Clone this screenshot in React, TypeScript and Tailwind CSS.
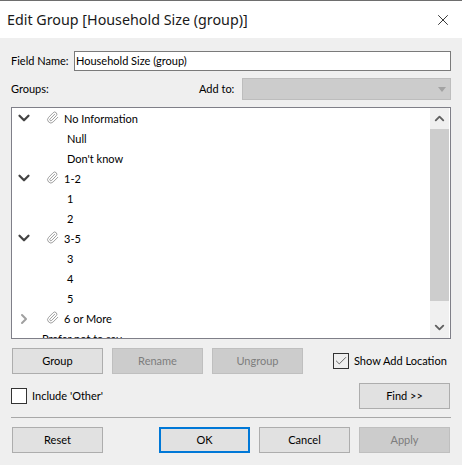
import { ChevronDown, ChevronRight, ChevronUp, Paperclip, X, Check } from "lucide-react";

type Row = { label: string; kind: "open" | "closed" | "item" | "loose" };

const rows: Row[] = [
  { label: "No Information", kind: "open" },
  { label: "Null", kind: "item" },
  { label: "Don't know", kind: "item" },
  { label: "1-2", kind: "open" },
  { label: "1", kind: "item" },
  { label: "2", kind: "item" },
  { label: "3-5", kind: "open" },
  { label: "3", kind: "item" },
  { label: "4", kind: "item" },
  { label: "5", kind: "item" },
  { label: "6 or More", kind: "closed" },
  { label: "Prefer not to say", kind: "loose" },
];

function TreeRow({ row }: { row: Row }) {
  if (row.kind === "item") {
    return <div className="h-5 shrink-0 pl-[52px] leading-5">{row.label}</div>;
  }
  if (row.kind === "loose") {
    return <div className="h-5 shrink-0 pl-[27px] leading-5">{row.label}</div>;
  }
  return (
    <div className="flex h-5 shrink-0 items-center">
      <span className="flex w-[18px] justify-center">
        {row.kind === "open" ? (
          <ChevronDown className="mb-[2px] h-[18px] w-[18px] shrink-0 text-[#444444]" strokeWidth={3} />
        ) : (
          <ChevronRight className="h-[16px] w-[16px] shrink-0 text-[#a0a0a0]" strokeWidth={3} />
        )}
      </span>
      <Paperclip className="ml-[13px] mb-[3px] h-[13px] w-[13px] text-[#8a8a8a]" strokeWidth={1.5} />
      <span className="ml-[5px] leading-5">{row.label}</span>
    </div>
  );
}

function Btn({ label, disabled, primary, className = "" }: { label: string; disabled?: boolean; primary?: boolean; className?: string }) {
  const look = disabled
    ? "border-[#bfbfbf] bg-[#cccccc] text-[#7d7d7d]"
    : primary
      ? "border-2 border-[#0078d7] bg-[#e1e1e1] text-black"
      : "border-[#adadad] bg-[#e1e1e1] text-black";
  return (
    <div className={`flex h-[26px] w-[91px] shrink-0 items-center justify-center border ${look} ${className}`}>{label}</div>
  );
}

export default function App() {
  return (
    <div className="h-[465px] w-[462px] overflow-hidden bg-[#efefef] font-['Lato','Noto_Sans',sans-serif] text-[11px] text-black">
      <div className="flex h-[38px] items-center justify-between border-t border-[#6e6e6e] bg-white pl-[7px] pr-[10px]">
        <span className="font-['Noto_Sans',sans-serif] text-[14.3px] text-[#1a1a1a]">Edit Group [Household Size (group)]</span>
        <X className="h-[18px] w-[18px] text-[#222222]" strokeWidth={1.2} />
      </div>

      <div className="px-[11px]">
        <div className="mt-[13px] flex h-[20px] items-center">
          <span className="w-[63px] whitespace-nowrap">Field Name:</span>
          <div className="flex h-full flex-1 items-center border border-[#7a7a7a] bg-white pl-[1px]">Household Size (group)</div>
        </div>

        <div className="mt-[7px] flex h-[22px] items-center">
          <span className="w-[188px]">Groups:</span>
          <span className="w-[43px]">Add to:</span>
          <div className="flex h-full flex-1 items-center justify-end border border-[#bdbdbd] bg-[#cccccc] pr-[4px]">
            <div className="h-0 w-0 border-x-[4px] border-t-[5px] border-x-transparent border-t-[#a3a3a3]" />
          </div>
        </div>

        <div className="mt-[7px] flex h-[232px] border border-[#7f7f88] bg-white">
          <div className="flex min-w-0 flex-1 flex-col overflow-hidden pl-[3px] pt-[1px]">
            {rows.map((row) => (
              <TreeRow key={row.label} row={row} />
            ))}
          </div>
          <div className="mr-[1px] flex w-[19px] flex-col bg-[#f0f0f0]">
            <div className="flex h-[21px] items-center justify-center">
              <ChevronUp className="h-[15px] w-[15px] text-[#606060]" strokeWidth={3} />
            </div>
            <div className="h-[172px] bg-[#cdcdcd]" />
            <div className="flex flex-1 items-end justify-center pb-[3px]">
              <ChevronDown className="h-[15px] w-[15px] text-[#606060]" strokeWidth={3} />
            </div>
          </div>
        </div>

        <div className="mt-[9px] flex items-center pl-[1px]">
          <Btn label="Group" />
          <Btn label="Rename" disabled className="ml-[9px]" />
          <Btn label="Ungroup" disabled className="ml-[9px]" />
          <div className="ml-[30px] flex h-[16px] w-[16px] items-center justify-center border border-[#333333] bg-[#efefef]">
            <Check className="h-[14px] w-[14px] text-[#555555]" strokeWidth={1.5} />
          </div>
          <span className="ml-[5px] whitespace-nowrap">Show Add Location</span>
        </div>

        <div className="mt-[9px] flex items-center justify-between">
          <div className="flex items-center">
            <div className="h-[16px] w-[16px] border border-[#333333] bg-white" />
            <span className="ml-[5px]">Include 'Other'</span>
          </div>
          <Btn label="Find >>" className="mr-[1px]" />
        </div>

        <div className="mt-[8px] h-px bg-[#a8a8a8]" />

        <div className="mt-[9px] flex pl-[1px]">
          <Btn label="Reset" />
          <Btn label="OK" primary className="ml-[56px]" />
          <Btn label="Cancel" className="ml-[9px]" />
          <Btn label="Apply" disabled className="ml-[9px]" />
        </div>
      </div>
    </div>
  );
}
